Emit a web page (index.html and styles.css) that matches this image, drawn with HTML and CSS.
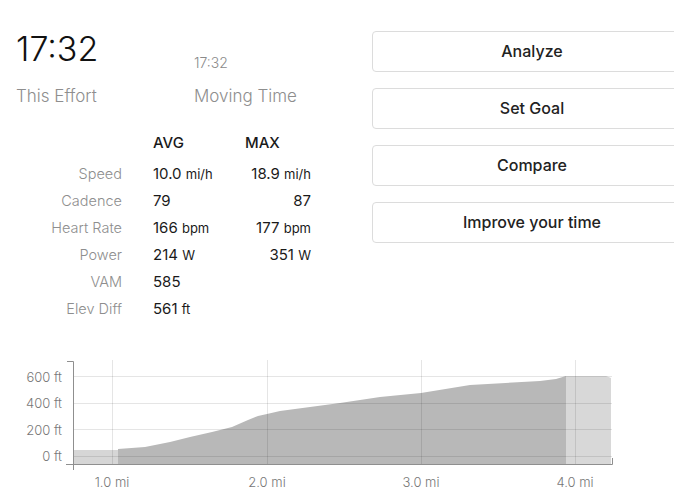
FILE: index.html
```html
<!DOCTYPE html>
<html>
<head>
<meta charset="utf-8">
<link rel="stylesheet" href="styles.css">
</head>
<body>
<div class="page">
  <div class="top">
    <div class="left">
      <div class="times">
        <div class="big">17:32</div>
        <div class="small">17:32</div>
        <div class="lab">This Effort</div>
        <div class="lab">Moving Time</div>
      </div>
      <div class="stats">
        <div class="hrow"></div><div class="head c2">AVG</div><div class="head">MAX</div>
        <div class="name">Speed</div><div class="v c2">10.0 <span class="u">mi/h</span></div><div class="v r">18.9 <span class="u">mi/h</span></div>
        <div class="name">Cadence</div><div class="v c2">79</div><div class="v r">87</div>
        <div class="name">Heart Rate</div><div class="v c2">166 <span class="u">bpm</span></div><div class="v r">177 <span class="u">bpm</span></div>
        <div class="name">Power</div><div class="v c2">214 <span class="u">W</span></div><div class="v r">351 <span class="u">W</span></div>
        <div class="name">VAM</div><div class="v c2">585</div><div class="v r"></div>
        <div class="name">Elev Diff</div><div class="v c2">561 <span class="u">ft</span></div><div class="v r"></div>
      </div>
    </div>
    <div class="actions">
      <button class="btn">Analyze</button>
      <button class="btn">Set Goal</button>
      <button class="btn">Compare</button>
      <button class="btn">Improve your time</button>
    </div>
  </div>
  <svg class="chart" width="674" height="150" viewBox="0 350 674 150">
    <rect x="73" y="450" width="45" height="14" fill="#d6d6d6"/>
    <path d="M118,464 L118,449 L145,447 L170,442 L190,437 L212,432 L232,427 L248,420 L258,416 L267,414 L280,411 L340,403 L380,397 L421,393 L470,385 L540,381 L556,379 L566,376 L566,464 Z" fill="#b8b8b8"/>
    <path d="M566,376 L606,376 L611,378 L611,464 L566,464 Z" fill="#d8d8d8"/>
    <g stroke="rgba(0,0,0,0.1)" stroke-width="1">
      <line x1="73" y1="376.5" x2="612" y2="376.5"/>
      <line x1="73" y1="403.5" x2="612" y2="403.5"/>
      <line x1="73" y1="429.5" x2="612" y2="429.5"/>
      <line x1="73" y1="456.5" x2="612" y2="456.5"/>
      <line x1="112.5" y1="360" x2="112.5" y2="464"/>
      <line x1="267.5" y1="360" x2="267.5" y2="464"/>
      <line x1="421.5" y1="360" x2="421.5" y2="464"/>
      <line x1="575.5" y1="360" x2="575.5" y2="464"/>
    </g>
    <g stroke="#8f8f8f" stroke-width="1" fill="none">
      <path d="M67,361.5 H73.5 V470"/>
      <path d="M66,464.5 H612.5 V458"/>
    </g>
    <g class="ylab">
      <text x="62" y="382">600 ft</text>
      <text x="62" y="408">400 ft</text>
      <text x="62" y="435">200 ft</text>
      <text x="62" y="461">0 ft</text>
    </g>
    <g class="xlab">
      <text x="112" y="487">1.0 mi</text>
      <text x="267" y="487">2.0 mi</text>
      <text x="421" y="487">3.0 mi</text>
      <text x="575" y="487">4.0 mi</text>
    </g>
  </svg>
</div>
</body>
</html>
```

FILE: styles.css
```css
html, body {
  margin: 0;
  padding: 0;
  background: #fff;
  overflow: hidden;
}
body {
  font-family: Inter, "Noto Sans", sans-serif;
  color: #1e1e1e;
  width: 674px;
  height: 500px;
}
.page {
  padding-top: 29px;
}
.top {
  display: flex;
  padding-left: 16px;
  height: 321px;
}
.left {
  width: 356px;
  flex-shrink: 0;
}
.times {
  display: grid;
  grid-template-columns: 178px auto;
  align-items: end;
}
.big {
  font-size: 34px;
  line-height: 40px;
  font-weight: 350;
  color: #111;
}
.small {
  font-size: 14px;
  line-height: 18px;
  font-weight: 300;
  color: #8a8a8a;
  margin-bottom: -3px;
}
.lab {
  font-size: 17px;
  line-height: 22px;
  font-weight: 300;
  color: #8e8e8e;
  margin-top: 16px;
}
.stats {
  display: grid;
  grid-template-columns: 106px 123px 66px;
  grid-auto-rows: 27px;
  grid-template-rows: 31px;
  margin-top: 22px;
  font-size: 15px;
  line-height: 27px;
}
.head {
  font-weight: 500;
  color: #1a1a1a;
}
.c2 { padding-left: 31px; }
.name {
  text-align: right;
  color: #8e8e8e;
  font-weight: 300;
  font-size: 14.5px;
}
.v { color: #1a1a1a; }
.v.r { text-align: right; }
.u { font-size: 13px; }
.actions {
  width: 320px;
  flex-shrink: 0;
  display: flex;
  flex-direction: column;
  gap: 16px;
  margin-top: 2px;
}
.btn {
  height: 41px;
  width: 320px;
  border: 1px solid #dcdcdc;
  border-radius: 4px;
  background: #fff;
  font-family: Inter, "Noto Sans", sans-serif;
  font-size: 16px;
  font-weight: 500;
  color: #222;
  padding: 0 0 1px;
}
.chart {
  display: block;
}
.ylab text {
  font-family: Inter, "Noto Sans", sans-serif;
  font-size: 13px;
  font-weight: 300;
  fill: #777;
  text-anchor: end;
}
.xlab text {
  font-family: Inter, "Noto Sans", sans-serif;
  font-size: 13px;
  font-weight: 300;
  fill: #777;
  text-anchor: middle;
}
```
